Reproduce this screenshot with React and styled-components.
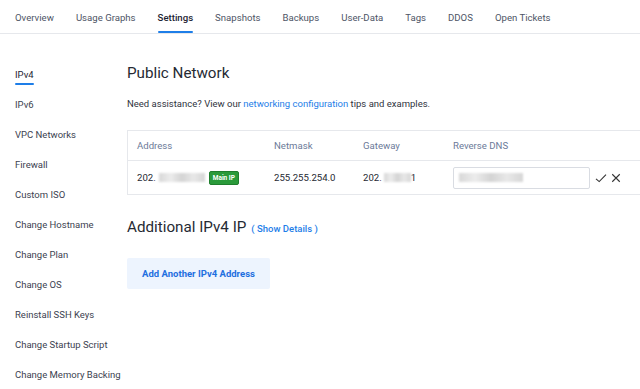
import styled, { createGlobalStyle } from 'styled-components'

const GlobalStyle = createGlobalStyle`
  html, body {
    margin: 0;
    padding: 0;
    background: #ffffff;
    font-family: Roboto, "Liberation Sans", Arial, sans-serif;
    color: #333;
  }
  * { box-sizing: border-box; }
`

const Page = styled.div`
  width: 640px;
  height: 389px;
  overflow: hidden;
  background: #fff;
`

const TabBar = styled.nav`
  display: flex;
  height: 34px;
  padding-left: 4px;
  border-bottom: 1px solid #e6e8ec;
`

const Tab = styled.div`
  position: relative;
  display: flex;
  align-items: center;
  padding: 1px 11px 0;
  height: 33px;
  font-size: 9.6px;
  color: ${p => (p.$active ? '#1d2433' : '#4e5566')};
  font-weight: ${p => (p.$active ? 500 : 400)};

  &::after {
    content: '';
    display: ${p => (p.$active ? 'block' : 'none')};
    position: absolute;
    left: 11px;
    right: 11px;
    bottom: 0;
    height: 2px;
    background: #1e7ee8;
    border-radius: 1px;
  }
`

const Body = styled.div`
  display: flex;
`

const Sidebar = styled.aside`
  width: 127px;
  display: flex;
  flex-direction: column;
  padding: 35px 0 0 15px;
`

const SideItem = styled.div`
  height: 30px;
  font-size: 9.5px;
  color: ${p => (p.$active ? '#1d2433' : '#3c4250')};
  position: relative;
  width: fit-content;
  white-space: nowrap;

  &::after {
    content: '';
    display: ${p => (p.$active ? 'block' : 'none')};
    position: absolute;
    left: 0;
    right: 0;
    top: 14px;
    height: 2px;
    background: #1e7ee8;
    border-radius: 1px;
  }
`

const Main = styled.main`
  flex: 1;
  padding-top: 30px;
  min-width: 0;
`

const Heading = styled.h2`
  margin: 0;
  font-size: 15.2px;
  font-weight: 400;
  color: #262a33;
  display: flex;
  align-items: baseline;
  gap: 5px;
`

const Help = styled.p`
  margin: 16px 0 0;
  font-size: 9.5px;
  color: #2f3440;
`

const Link = styled.span`
  color: #1e7ee8;
`

const SmallLink = styled.span`
  color: #1e7ee8;
  font-size: 9.5px;
  font-weight: 500;
`

const Table = styled.div`
  margin-top: 21px;
  border: 1px solid #e6e8ec;
  border-right: none;
  width: 520px;
`

const Row = styled.div`
  display: grid;
  grid-template-columns: 137px 89px 90px 1fr;
  align-items: center;
  height: ${p => (p.$head ? '29px' : '34px')};
  padding-left: 9px;
  border-top: ${p => (p.$head ? 'none' : '1px solid #e6e8ec')};
  font-size: 9.6px;
  color: ${p => (p.$head ? '#6c7a99' : '#262a33')};
`

const Cell = styled.div`
  display: flex;
  align-items: center;
  white-space: nowrap;
`

const Blur = styled.span`
  display: inline-block;
  width: ${p => p.$w}px;
  height: 9px;
  margin-left: ${p => p.$ml || 0}px;
  background: linear-gradient(90deg, #d8d8d8 0%, #ececec 25%, #d4d4d4 50%, #e8e8e8 75%, #d6d6d6 100%);
  filter: blur(1.2px);
`

const Badge = styled.span`
  margin-left: 4px;
  background: #2a9a3a;
  border: 1px solid #1f7e2d;
  color: #fff;
  font-size: 6.5px;
  font-weight: 700;
  padding: 2px 3px;
  border-radius: 2px;
  line-height: 8px;
`

const Input = styled.div`
  width: 137px;
  height: 22px;
  border: 1px solid #d9dce2;
  border-radius: 2px;
  display: flex;
  align-items: center;
  padding-left: 5px;
`

const Icons = styled.div`
  display: flex;
  align-items: center;
  gap: 4px;
  margin-left: 5px;
  color: #333;
`

const SubHeading = styled(Heading)`
  margin-top: 23px;
`

const AddButton = styled.button`
  margin-top: 22px;
  width: 143px;
  height: 31px;
  border: none;
  border-radius: 2px;
  background: #edf4fe;
  color: #1e6fe0;
  font-family: inherit;
  font-size: 9.5px;
  font-weight: 700;
  padding: 0;
`

const tabs = ['Overview', 'Usage Graphs', 'Settings', 'Snapshots', 'Backups', 'User-Data', 'Tags', 'DDOS', 'Open Tickets']
const sideItems = ['IPv4', 'IPv6', 'VPC Networks', 'Firewall', 'Custom ISO', 'Change Hostname', 'Change Plan', 'Change OS', 'Reinstall SSH Keys', 'Change Startup Script', 'Change Memory Backing']

const App = () => {
  return (
    <Page>
      <GlobalStyle />
      <TabBar>
        {tabs.map(t => (
          <Tab key={t} $active={t === 'Settings'}>{t}</Tab>
        ))}
      </TabBar>
      <Body>
        <Sidebar>
          {sideItems.map(s => (
            <SideItem key={s} $active={s === 'IPv4'}>{s}</SideItem>
          ))}
        </Sidebar>
        <Main>
          <Heading>Public Network</Heading>
          <Help>
            Need assistance? View our <Link>networking configuration</Link> tips and examples.
          </Help>
          <Table>
            <Row $head>
              <Cell>Address</Cell>
              <Cell>Netmask</Cell>
              <Cell>Gateway</Cell>
              <Cell>Reverse DNS</Cell>
            </Row>
            <Row>
              <Cell>
                202.<Blur $w={46} $ml={3} />
                <Badge>Main IP</Badge>
              </Cell>
              <Cell>255.255.254.0</Cell>
              <Cell>
                202.<Blur $w={27} $ml={2} />1
              </Cell>
              <Cell>
                <Input>
                  <Blur $w={64} />
                </Input>
                <Icons>
                  <svg width="12" height="12" viewBox="0 0 12 12" fill="none" stroke="#333" strokeWidth="1.1">
                    <path d="M1 6.8 L4.2 9.6 L11 2.6" />
                  </svg>
                  <svg width="10" height="10" viewBox="0 0 12 12" fill="none" stroke="#333" strokeWidth="1.3">
                    <path d="M1.5 1.5 L10.5 10.5 M10.5 1.5 L1.5 10.5" />
                  </svg>
                </Icons>
              </Cell>
            </Row>
          </Table>
          <SubHeading>
            Additional IPv4 IP <SmallLink>( Show Details )</SmallLink>
          </SubHeading>
          <AddButton>Add Another IPv4 Address</AddButton>
        </Main>
      </Body>
    </Page>
  )
}

export default App
